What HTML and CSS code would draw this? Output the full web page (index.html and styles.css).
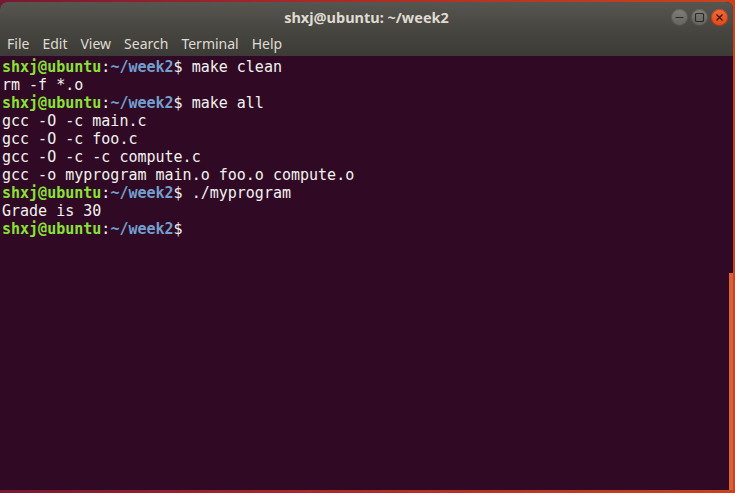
FILE: index.html
```html
<!DOCTYPE html>
<html lang="en">
<head>
    <meta charset="UTF-8">
    <title>shxj@ubuntu: ~/week2</title>
    <link rel="stylesheet" href="styles.css">
</head>
<body>

    <div class="window">
        <!-- Title bar -->
        <div class="titlebar">
            <div></div>
            <div class="title">shxj@ubuntu: ~/week2</div>
            <div class="controls">
                <span class="btn min"><svg width="17" height="17" viewBox="0 0 17 17"><line x1="4.5" y1="8.5" x2="12.5" y2="8.5" stroke="#2b2a27" stroke-width="1.2"/></svg></span>
                <span class="btn max"><svg width="17" height="17" viewBox="0 0 17 17"><rect x="4.5" y="4.5" width="8" height="8" rx="1" fill="none" stroke="#2b2a27" stroke-width="1.2"/></svg></span>
                <span class="btn close"><svg width="17" height="17" viewBox="0 0 17 17"><path d="M5.5 5.5 L11.5 11.5 M11.5 5.5 L5.5 11.5" stroke="#3a1406" stroke-width="1.3"/></svg></span>
            </div>
        </div>

        <!-- Menu -->
        <div class="menubar">
            <span>File</span>
            <span>Edit</span>
            <span>View</span>
            <span>Search</span>
            <span>Terminal</span>
            <span>Help</span>
        </div>

        <!-- Terminal -->
        <div class="terminal">
            <pre class="output"><span class="user">shxj@ubuntu</span>:<span class="path">~/week2</span>$ make clean
rm -f *.o
<span class="user">shxj@ubuntu</span>:<span class="path">~/week2</span>$ make all
gcc -O -c main.c
gcc -O -c foo.c
gcc -O -c -c compute.c
gcc -o myprogram main.o foo.o compute.o
<span class="user">shxj@ubuntu</span>:<span class="path">~/week2</span>$ ./myprogram
Grade is 30
<span class="user">shxj@ubuntu</span>:<span class="path">~/week2</span>$</pre>
            <div class="scrollbar">
                <div class="thumb"></div>
            </div>
        </div>
    </div>

</body>
</html>
```

FILE: styles.css
```css
/* Desktop behind the window */
body {
    margin: 0;
    height: 493px;
    overflow: hidden;
    background: linear-gradient(90deg, #7a1830, #a8282a 40%, #c9431f);
    font-family: 'Noto Sans', 'Open Sans', sans-serif;
}

.window {
    margin: 2px 2px 0 0;
    height: 488px;
    display: flex;
    flex-direction: column;
    border-radius: 7px 7px 0 0;
    overflow: hidden;
    background: #300a24;
}

/* Title bar */
.titlebar {
    height: 29px;
    display: grid;
    grid-template-columns: 1fr auto 1fr;
    align-items: center;
    background: linear-gradient(#57554f, #46453f);
}

.title {
    color: #dfdbd2;
    font-size: 14.5px;
    font-weight: bold;
    padding-top: 1px;
}

.controls {
    display: flex;
    justify-content: flex-end;
    gap: 3px;
    padding-right: 5px;
    padding-top: 1px;
}

.btn {
    width: 17px;
    height: 17px;
    border-radius: 50%;
    display: flex;
}

.btn.min,
.btn.max {
    background: linear-gradient(#807e78, #65635e);
    box-shadow: inset 0 0 0 1px rgba(0, 0, 0, 0.2);
}

.btn.close {
    background: linear-gradient(#f26a3a, #e04a18);
    box-shadow: inset 0 0 0 1px rgba(120, 30, 0, 0.4);
}

/* Menu */
.menubar {
    height: 25px;
    display: flex;
    align-items: center;
    gap: 13px;
    padding-left: 7px;
    background: linear-gradient(#46453f, #3c3b37);
    color: #dfdbd2;
    font-size: 14px;
}

/* Terminal area */
.terminal {
    flex: 1;
    display: flex;
}

.output {
    flex: 1;
    margin: 0;
    padding: 2px 0 0 2px;
    font-family: 'DejaVu Sans Mono', monospace;
    font-size: 15px;
    line-height: 18px;
    color: #f2f2f0;
}

.user {
    color: #8ae234;
    font-weight: bold;
}

.path {
    color: #729fcf;
    font-weight: bold;
}

.scrollbar {
    width: 5px;
    margin-right: -1px;
    display: flex;
    flex-direction: column;
    justify-content: flex-end;
}

.thumb {
    height: 217px;
    background: #d8603b;
}
```
